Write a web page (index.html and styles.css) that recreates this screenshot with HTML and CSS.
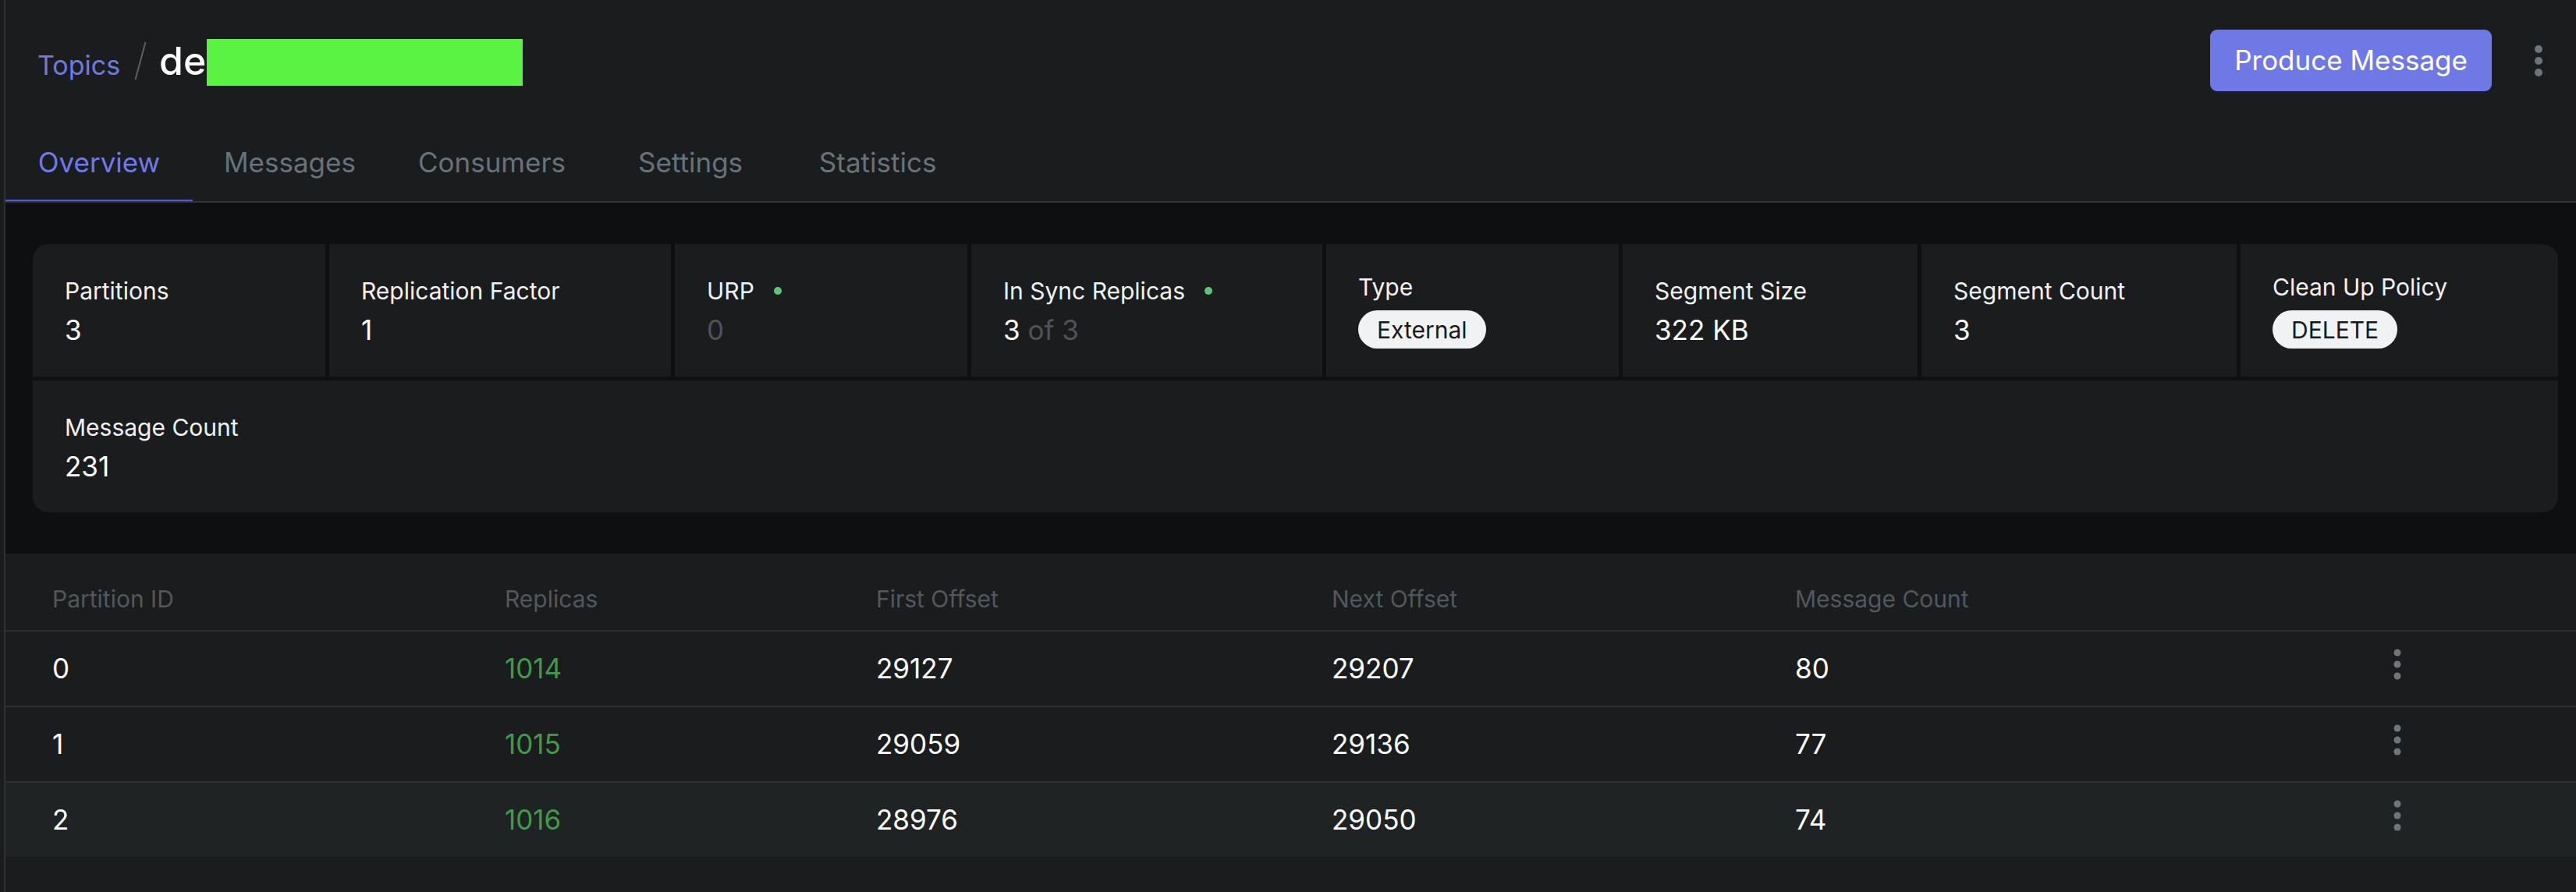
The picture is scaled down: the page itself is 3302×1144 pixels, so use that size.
FILE: index.html
```html
<!DOCTYPE html>
<html lang="en">
<head>
<meta charset="utf-8">
<title>Topic overview</title>
<link rel="stylesheet" href="styles.css">
</head>
<body>
<div class="app">
  <aside class="rail"></aside>
  <main class="main">
    <header class="page-head">
      <div class="title-row">
        <nav class="crumbs">
          <a class="crumb-link" href="#">Topics</a>
          <svg class="crumb-sep" width="16" height="50" viewBox="0 0 16 50"><line x1="14.5" y1="1" x2="1.5" y2="49" stroke="#5b6167" stroke-width="2"/></svg>
          <h1 class="crumb-title">de<span class="redact"></span></h1>
        </nav>
        <div class="head-actions">
          <button class="btn-primary" type="button">Produce Message</button>
          <button class="kebab" type="button" aria-label="More">
            <svg width="10" height="40" viewBox="0 0 10 40"><circle cx="5" cy="5" r="5"/><circle cx="5" cy="20" r="5"/><circle cx="5" cy="35" r="5"/></svg>
          </button>
        </div>
      </div>
      <nav class="tabs">
        <a class="tab is-active" href="#">Overview</a>
        <a class="tab" href="#">Messages</a>
        <a class="tab" href="#">Consumers</a>
        <a class="tab" href="#">Settings</a>
        <a class="tab" href="#">Statistics</a>
      </nav>
    </header>

    <section class="metrics">
      <div class="metrics-grid">
        <div class="metric">
          <div class="metric-label">Partitions</div>
          <div class="metric-value">3</div>
        </div>
        <div class="metric">
          <div class="metric-label">Replication Factor</div>
          <div class="metric-value">1</div>
        </div>
        <div class="metric">
          <div class="metric-label">URP <span class="status-dot"></span></div>
          <div class="metric-value muted">0</div>
        </div>
        <div class="metric">
          <div class="metric-label">In Sync Replicas <span class="status-dot"></span></div>
          <div class="metric-value">3<span class="muted"> of 3</span></div>
        </div>
        <div class="metric">
          <div class="metric-label">Type</div>
          <span class="tag">External</span>
        </div>
        <div class="metric">
          <div class="metric-label">Segment Size</div>
          <div class="metric-value">322 KB</div>
        </div>
        <div class="metric">
          <div class="metric-label">Segment Count</div>
          <div class="metric-value">3</div>
        </div>
        <div class="metric">
          <div class="metric-label">Clean Up Policy</div>
          <span class="tag">DELETE</span>
        </div>
        <div class="metric metric-wide">
          <div class="metric-label">Message Count</div>
          <div class="metric-value">231</div>
        </div>
      </div>
    </section>

    <section class="table-wrap">
      <table class="partitions">
        <colgroup>
          <col class="c-id"><col class="c-rep"><col class="c-first"><col class="c-next"><col class="c-count"><col>
        </colgroup>
        <thead>
          <tr><th>Partition ID</th><th>Replicas</th><th>First Offset</th><th>Next Offset</th><th>Message Count</th><th></th></tr>
        </thead>
        <tbody>
          <tr>
            <td>0</td><td class="replica">1014</td><td>29127</td><td>29207</td><td>80</td>
            <td class="actions"><svg width="10" height="40" viewBox="0 0 10 40"><circle cx="5" cy="5" r="4.5"/><circle cx="5" cy="20" r="4.5"/><circle cx="5" cy="35" r="4.5"/></svg></td>
          </tr>
          <tr>
            <td>1</td><td class="replica">1015</td><td>29059</td><td>29136</td><td>77</td>
            <td class="actions"><svg width="10" height="40" viewBox="0 0 10 40"><circle cx="5" cy="5" r="4.5"/><circle cx="5" cy="20" r="4.5"/><circle cx="5" cy="35" r="4.5"/></svg></td>
          </tr>
          <tr class="is-hover">
            <td>2</td><td class="replica">1016</td><td>28976</td><td>29050</td><td>74</td>
            <td class="actions"><svg width="10" height="40" viewBox="0 0 10 40"><circle cx="5" cy="5" r="4.5"/><circle cx="5" cy="20" r="4.5"/><circle cx="5" cy="35" r="4.5"/></svg></td>
          </tr>
        </tbody>
      </table>
    </section>
  </main>
</div>
</body>
</html>
```

FILE: styles.css
```css
* { box-sizing: border-box; }

html, body {
  margin: 0;
  height: 100%;
}

body {
  background: #1b1c1e;
  color: #ffffff;
  font-family: Inter, "Noto Sans", "Liberation Sans", sans-serif;
  overflow: hidden;
}

.app {
  display: flex;
  min-height: 100vh;
}

.rail {
  flex: 0 0 7px;
  background: #1b1c1e;
  border-right: 2px solid #2c3133;
}

.main {
  flex: 1;
  min-width: 0;
  display: flex;
  flex-direction: column;
}

/* ---------- header ---------- */
.page-head {
  background: #1b1c1e;
}

.title-row {
  height: 155px;
  display: flex;
  align-items: center;
  justify-content: space-between;
  padding: 0 43px 0 41px;
}

.crumbs {
  display: flex;
  align-items: baseline;
  height: 80px;
}

.crumb-link {
  font-size: 34px;
  line-height: 50px;
  color: #6f79e5;
  text-decoration: none;
}

.crumb-sep {
  align-self: center;
  margin: 0 16px 0 18px;
}

.crumb-title {
  margin: 0;
  font-size: 50px;
  line-height: 80px;
  font-weight: 500;
  color: #ffffff;
}

.redact {
  display: inline-block;
  width: 405px;
  height: 60px;
  margin-left: 1px;
  background: #5af243;
  vertical-align: -14px;
}

.head-actions {
  display: flex;
  align-items: center;
  gap: 55px;
}

.btn-primary {
  height: 79px;
  padding: 0 31px;
  border: 0;
  border-radius: 9px;
  background: #6f79e5;
  color: #ffffff;
  font-family: inherit;
  font-size: 35px;
  line-height: 1;
}

.kebab {
  display: flex;
  padding: 0;
  border: 0;
  background: none;
  fill: #6b777d;
}

.tabs {
  display: flex;
  border-bottom: 2px solid #2f3538;
}

.tab {
  height: 103px;
  min-width: 240px;
  display: flex;
  justify-content: center;
  align-items: center;
  padding: 4px 40px 0;
  border-bottom: 2px solid transparent;
  font-size: 35px;
  line-height: 50px;
  color: #67737a;
  text-decoration: none;
}

.tab.is-active {
  color: #6f7ae6;
  border-bottom-color: #4a5de6;
}

/* ---------- metrics ---------- */
.metrics {
  background: #0e0f11;
  padding: 53px 23px 53px 35px;
}

.metrics-grid {
  display: grid;
  grid-template-columns: 375px 438px 375px 450px 375px 378px 404px 1fr;
  gap: 5px;
  border-radius: 20px;
  overflow: hidden;
}

.metric {
  height: 170px;
  padding: 0 40px 0 41px;
  display: flex;
  flex-direction: column;
  justify-content: center;
  align-items: flex-start;
  background: #1b1c1e;
}

.metric-wide {
  grid-column: 1 / -1;
  height: 169px;
}

.metric-label {
  display: flex;
  align-items: center;
  gap: 25px;
  font-size: 30px;
  line-height: 50px;
  color: #f1f2f3;
}

.status-dot {
  width: 10px;
  height: 10px;
  border-radius: 50%;
  background: #5ec47a;
}

.metric-value {
  font-size: 35px;
  line-height: 50px;
  color: #ffffff;
}

.muted {
  color: #4d5459;
}

.tag {
  display: inline-flex;
  align-items: center;
  height: 49px;
  margin: 5px 0 6px;
  padding: 0 24px;
  border-radius: 25px;
  background: #f1f2f3;
  color: #171a1c;
  font-size: 30px;
}

/* ---------- table ---------- */
.table-wrap {
  flex: 1;
  background: #1b1c1e;
}

.partitions {
  width: 100%;
  border-collapse: collapse;
  table-layout: fixed;
}

.c-id { width: 580px; }
.c-rep { width: 476px; }
.c-first { width: 584px; }
.c-next { width: 594px; }
.c-count { width: 767px; }

.partitions th {
  text-align: left;
  font-weight: 400;
  font-size: 30px;
  line-height: 50px;
  color: #50585e;
  padding: 33px 0 15px 60px;
  border-bottom: 2px solid #2b3133;
}

.partitions td {
  font-size: 35px;
  line-height: 50px;
  color: #ffffff;
  padding: 22px 0 23px 60px;
  border-bottom: 2px solid #2b3133;
}

.partitions tr.is-hover td {
  background: #202324;
  border-bottom: 0;
}

.partitions td.replica {
  color: #3f9b4b;
}

.partitions td.actions svg {
  vertical-align: top;
  fill: #6b777d;
}
```
